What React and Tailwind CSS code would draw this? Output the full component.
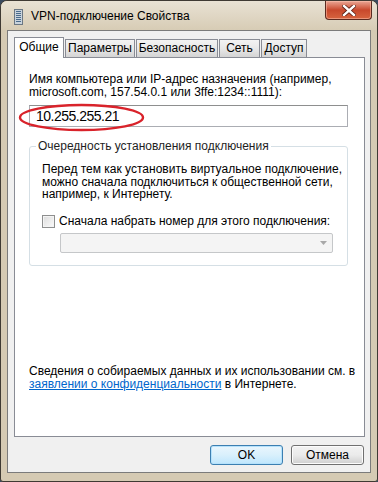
import React from "react";

const tabs = [
  { label: "Общие", w: "w-[50px]", active: true },
  { label: "Параметры", w: "w-[70px]" },
  { label: "Безопасность", w: "w-[82px]" },
  { label: "Сеть", w: "w-[41px]" },
  { label: "Доступ", w: "w-[46px]" },
];

const WinIcon = () => (
  <svg width="9" height="16" viewBox="0 0 9 16">
    <rect x="0.5" y="0.5" width="8" height="15" fill="#c9d3dc" stroke="#6b7783" />
    <rect x="2" y="2" width="5" height="1" fill="#4a6b8c" />
    <rect x="2" y="4" width="5" height="1" fill="#4a6b8c" />
    <rect x="2" y="6" width="5" height="1" fill="#4a6b8c" />
    <rect x="2" y="8" width="5" height="1" fill="#4a6b8c" />
    <rect x="2" y="10" width="5" height="1" fill="#4a6b8c" />
    <rect x="2" y="12" width="5" height="1" fill="#4a6b8c" />
  </svg>
);

const CloseButton = () => (
  <div className="w-[47px] h-[19px] rounded-b-[4px] border border-t-0 border-[#5b2a20] bg-gradient-to-b from-[#e9a695] via-[#c8482c] to-[#d7643f] flex items-center justify-center shadow-[inset_0_0_0_1px_rgba(255,200,180,0.5)]">
    <svg width="14" height="11" viewBox="0 0 14 11">
      <path d="M2 1 L12 10 M12 1 L2 10" stroke="#5a1f14" strokeWidth="4" strokeLinecap="square" />
      <path d="M2 1 L12 10 M12 1 L2 10" stroke="#ffffff" strokeWidth="2.4" strokeLinecap="square" />
    </svg>
  </div>
);

const App = () => {
  return (
    <div
      className="w-[378px] h-[482px] bg-[#3a4a5e]"
      style={{ fontFamily: '"Liberation Sans", Arial, sans-serif' }}
    >
      <div className="w-[378px] h-[482px] flex flex-col rounded-t-[7px] rounded-b-[3px] border border-[#3f3a33] bg-[#d5cab3] overflow-hidden">
        {/* title bar */}
        <div className="h-[29px] shrink-0 flex items-start bg-gradient-to-b from-[#e9e2d4] to-[#d7ccb5]">
          <div className="pl-[13px] pt-[8px]">
            <WinIcon />
          </div>
          <div className="pl-[8px] pt-[8px] text-[12px] leading-[14px] text-black whitespace-nowrap">
            VPN-подключение Свойства
          </div>
          <div className="ml-auto mr-[5px]">
            <CloseButton />
          </div>
        </div>

        {/* client area */}
        <div className="flex-1 flex flex-col mx-[6px] mb-[8px] border border-[#7b7b7b] bg-[#f0f0f0] pt-[6px] pl-[6px] pr-[5px] pb-[7px]">
          <div className="h-[20px] flex items-end relative z-10">
            {tabs.map((t) =>
              t.active ? (
                <div
                  key={t.label}
                  className={`${t.w} h-[21px] -mb-[1px] bg-white border border-b-0 border-[#898c95] text-[12px] leading-[18px] text-center text-black`}
                >
                  {t.label}
                </div>
              ) : (
                <div
                  key={t.label}
                  className={`${t.w} ml-[1px] h-[18px] bg-gradient-to-b from-[#f3f3f3] via-[#e8e8e8] to-[#d4d4d4] border border-b-0 border-[#898c95] text-[12px] leading-[16px] text-center text-black whitespace-nowrap`}
                >
                  {t.label}
                </div>
              )
            )}
          </div>

          <div className="flex-1 flex flex-col bg-white border border-[#898c95] pl-[14px] pr-[13px] pt-[15px] text-[12px] leading-[12.5px] text-black whitespace-nowrap">
            <div>
              Имя компьютера или IP-адрес назначения (например,
              <br />
              microsoft.com, 157.54.0.1 или 3ffe:1234::1111):
            </div>

            <div className="relative mt-[7px] w-[319px] h-[22px] border border-[#abadb3] border-t-[#8e8f8f] flex items-center pl-[6px] text-[14px] tracking-[-0.5px]">
              10.255.255.21
              <svg
                className="absolute left-[-12px] top-[-3px]"
                width="127"
                height="29"
                viewBox="0 0 127 29"
              >
                <ellipse cx="63.5" cy="14.5" rx="61.5" ry="12.5" fill="none" stroke="#d9232b" strokeWidth="2.4" />
              </svg>
            </div>

            <div className="relative mt-[19px] w-[319px] h-[120px] border border-[#d5dfe5] rounded-[3px] pl-[12px] pt-[16px]">
              <div className="absolute left-[6px] top-[-7px] bg-white px-[2px] text-[12px] leading-[13px] text-[#1e1e1e]">
                Очередность установления подключения
              </div>
              <div className="leading-[12.5px]">
                Перед тем как установить виртуальное подключение,
                <br />
                можно сначала подключиться к общественной сети,
                <br />
                например, к Интернету.
              </div>
              <div className="mt-[14px] flex items-center">
                <div className="w-[13px] h-[13px] border border-[#8e8f8f] bg-gradient-to-br from-[#dcdcdc] to-[#fbfbfb] shadow-[inset_0_0_0_1px_#f4f4f4]" />
                <div className="ml-[4px] leading-[13px]">
                  Сначала набрать номер для этого подключения:
                </div>
              </div>
              <div className="mt-[5px] ml-[18px] w-[273px] h-[20px] border border-[#c5c7c9] rounded-[2px] bg-[#f4f4f4] flex items-center justify-end pr-[5px]">
                <svg width="7" height="4" viewBox="0 0 7 4">
                  <path d="M0 0 L7 0 L3.5 4 Z" fill="#a8a8a8" />
                </svg>
              </div>
            </div>

            <div className="mt-auto mb-[46px]">
              Сведения о собираемых данных и их использовании см. в
              <br />
              <span className="text-[#0066cc] underline">заявлении о конфиденциальности</span> в Интернете.
            </div>
          </div>

          <div className="mt-[8px] h-[20px] flex justify-end gap-[8px] pr-[1px] text-[12px] text-black">
            <div className="w-[73px] h-[20px] rounded-[3px] border border-[#3c7fb1] bg-gradient-to-b from-[#eaf6fd] via-[#d9f0fc] to-[#bee6fd] flex items-center justify-center shadow-[inset_0_0_0_1px_#b5e2fc]">
              OK
            </div>
            <div className="w-[73px] h-[20px] rounded-[3px] border border-[#707070] bg-gradient-to-b from-[#f2f2f2] via-[#ebebeb] to-[#cfcfcf] flex items-center justify-center shadow-[inset_0_0_0_1px_#fcfcfc]">
              Отмена
            </div>
          </div>
        </div>
      </div>
    </div>
  );
};

export default App;
